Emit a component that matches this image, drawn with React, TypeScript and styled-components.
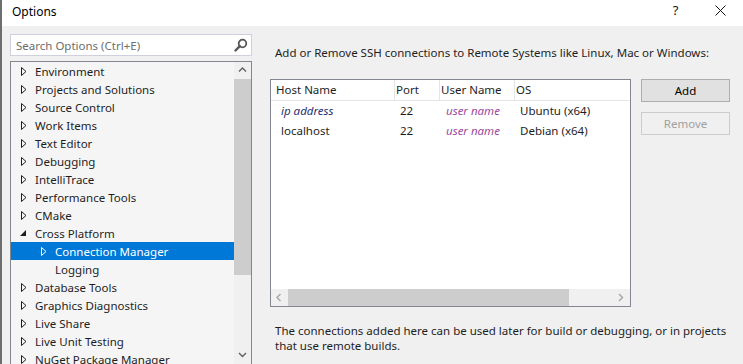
import styled, { createGlobalStyle, css } from 'styled-components'

const GlobalStyle = createGlobalStyle`
  html, body {
    margin: 0;
    padding: 0;
    background: #f0f0f0;
  }
  body {
    font-family: 'Noto Sans', 'Open Sans', sans-serif;
    font-size: 11px;
    color: #1e1e1e;
  }
`

const treeItems: { label: string; level: number; state: 'closed' | 'open' | 'leaf'; selected?: boolean }[] = [
  { label: 'Environment', level: 0, state: 'closed' },
  { label: 'Projects and Solutions', level: 0, state: 'closed' },
  { label: 'Source Control', level: 0, state: 'closed' },
  { label: 'Work Items', level: 0, state: 'closed' },
  { label: 'Text Editor', level: 0, state: 'closed' },
  { label: 'Debugging', level: 0, state: 'closed' },
  { label: 'IntelliTrace', level: 0, state: 'closed' },
  { label: 'Performance Tools', level: 0, state: 'closed' },
  { label: 'CMake', level: 0, state: 'closed' },
  { label: 'Cross Platform', level: 0, state: 'open' },
  { label: 'Connection Manager', level: 1, state: 'closed', selected: true },
  { label: 'Logging', level: 1, state: 'leaf' },
  { label: 'Database Tools', level: 0, state: 'closed' },
  { label: 'Graphics Diagnostics', level: 0, state: 'closed' },
  { label: 'Live Share', level: 0, state: 'closed' },
  { label: 'Live Unit Testing', level: 0, state: 'closed' },
  { label: 'NuGet Package Manager', level: 0, state: 'closed' },
]

const connections = [
  { host: 'ip address', port: '22', user: 'user name', os: 'Ubuntu (x64)', placeholder: true },
  { host: 'localhost', port: '22', user: 'user name', os: 'Debian (x64)', placeholder: false },
]

const Window = styled.div`
  width: 741px;
  height: 364px;
  overflow: hidden;
  border-left: 2px solid #6e6e6e;
  background: #f0f0f0;
  display: flex;
  flex-direction: column;
`

const TitleBar = styled.div`
  height: 26px;
  flex: none;
  background: #fff;
  display: flex;
  align-items: center;
  padding-left: 10px;
  font-size: 12px;
  color: #000;
`

const TitleText = styled.div`
  flex: 1;
  margin-top: -4px;
`

const TitleButton = styled.div<{ wide?: boolean }>`
  width: 45px;
  height: 26px;
  display: flex;
  align-items: center;
  justify-content: center;
  margin-top: -6px;
  font-size: 13px;
  color: #111;
`

const Body = styled.div`
  flex: 1;
  display: flex;
  min-height: 0;
`

const LeftPane = styled.div`
  width: 242px;
  flex: none;
  padding: 8px 0 0 8px;
  display: flex;
  flex-direction: column;
`

const SearchBox = styled.div`
  height: 20px;
  flex: none;
  border: 1px solid #cfd0de;
  background: #fff;
  display: flex;
  align-items: center;
  padding: 0 3px 0 5px;
  color: #6d6d6d;
  font-size: 11.5px;
`

const SearchPlaceholder = styled.span`
  flex: 1;
`

const TreePanel = styled.div`
  margin-top: 5px;
  flex: 1;
  border: 1px solid #828790;
  border-bottom: none;
  background: #f5f5f5;
  display: flex;
  min-height: 0;
`

const TreeList = styled.div`
  flex: 1;
  padding-top: 0;
`

const TreeRow = styled.div<{ level: number; selected?: boolean }>`
  ${({ level, selected }) => css`
    height: 18px;
    display: flex;
    align-items: center;
    padding-left: ${10 + level * 20}px;
    white-space: nowrap;
    font-size: 11.5px;
    color: ${selected ? '#fff' : '#1e1e1e'};
    background: ${selected ? '#0078d7' : 'transparent'};
  `}
`

const Expander = styled.span`
  width: 14px;
  flex: none;
  display: flex;
  align-items: center;
`

const VScrollBar = styled.div`
  width: 17px;
  flex: none;
  background: #f0f0f0;
  display: flex;
  flex-direction: column;
  align-items: center;
`

const ScrollArrow = styled.div`
  height: 17px;
  width: 17px;
  flex: none;
  display: flex;
  align-items: center;
  justify-content: center;
`

const VThumb = styled.div`
  width: 17px;
  height: 196px;
  flex: none;
  background: #cdcdcd;
`

const ScrollSpacer = styled.div`
  flex: 1;
`

const RightPane = styled.div`
  flex: 1;
  padding: 19px 0 0 18px;
  display: flex;
  flex-direction: column;
`

const Description = styled.div`
  padding-left: 5px;
  font-size: 11.5px;
  height: 16px;
  line-height: 16px;
  color: #1e1e1e;
`

const ListRow = styled.div`
  display: flex;
  margin-top: 18px;
  align-items: flex-start;
`

const ListBox = styled.div`
  width: 359px;
  height: 226px;
  border: 1px solid #828790;
  background: #fff;
  display: flex;
  flex-direction: column;
`

const Grid = styled.div`
  display: grid;
  grid-template-columns: 124px 45px 75px 1fr;
`

const HeaderCell = styled.div<{ pad: number; last?: boolean }>`
  ${({ pad, last }) => css`
    height: 20px;
    line-height: 20px;
    padding-left: ${pad}px;
    border-right: ${last ? 'none' : '1px solid #e5e5e5'};
    border-bottom: 1px solid #e5e5e5;
    font-size: 11.5px;
    color: #1e1e1e;
    white-space: nowrap;
  `}
`

const Cell = styled.div<{ pad: number; variant?: 'host' | 'user' }>`
  ${({ pad, variant }) => css`
    height: 20px;
    line-height: 20px;
    padding-left: ${pad}px;
    font-size: 11.5px;
    white-space: nowrap;
    color: #1e1e1e;
    ${variant === 'host' &&
    css`
      font-style: italic;
      color: #1f2f6e;
    `}
    ${variant === 'user' &&
    css`
      font-style: italic;
      color: #9b4a9d;
    `}
  `}
`

const ListFill = styled.div`
  flex: 1;
`

const HScrollBar = styled.div`
  height: 17px;
  flex: none;
  background: #f0f0f0;
  display: flex;
  align-items: center;
`

const HThumb = styled.div`
  width: 281px;
  height: 17px;
  background: #cdcdcd;
`

const ButtonColumn = styled.div`
  margin-left: 10px;
  display: flex;
  flex-direction: column;
  gap: 10px;
`

const Button = styled.div<{ disabled?: boolean }>`
  ${({ disabled }) => css`
    width: 87px;
    height: 21px;
    display: flex;
    align-items: center;
    justify-content: center;
    font-size: 11.5px;
    border: 1px solid ${disabled ? '#cccccc' : '#adadad'};
    background: ${disabled ? '#f0f0f0' : '#e1e1e1'};
    color: ${disabled ? '#a0a0a0' : '#000'};
  `}
`

const Footnote = styled.div`
  margin-top: 16px;
  padding-left: 5px;
  font-size: 11.5px;
  line-height: 15px;
  color: #1e1e1e;
  width: 470px;
`

const Triangle = ({ state, selected }: { state: 'closed' | 'open' | 'leaf'; selected?: boolean }) => {
  if (state === 'leaf') return <Expander />
  const color = selected ? '#fff' : '#1e1e1e'
  return (
    <Expander>
      {state === 'closed' ? (
        <svg width="6" height="9" viewBox="0 0 6 9">
          <path d="M0.5 0.5 L5 4.5 L0.5 8.5 Z" fill="none" stroke={color} strokeWidth="1" />
        </svg>
      ) : (
        <svg width="6" height="7" viewBox="0 0 6 7" style={{ marginLeft: -1 }}>
          <path d="M6 0 L6 6 L0 6 Z" fill={color} />
        </svg>
      )}
    </Expander>
  )
}

const Chevron = ({ dir, color }: { dir: 'up' | 'down' | 'left' | 'right'; color: string }) => {
  const d = {
    up: 'M1 5.5 L4.5 2 L8 5.5',
    down: 'M1 2 L4.5 5.5 L8 2',
    left: 'M5.5 1 L2 4.5 L5.5 8',
    right: 'M2 1 L5.5 4.5 L2 8',
  }[dir]
  return (
    <svg width="9" height="9" viewBox="0 0 9 9">
      <path d={d} fill="none" stroke={color} strokeWidth="1.4" />
    </svg>
  )
}

const SearchIcon = () => (
  <svg width="14" height="14" viewBox="0 0 14 14">
    <circle cx="8.5" cy="5.5" r="3.8" fill="none" stroke="#555" strokeWidth="1.8" />
    <path d="M5.8 8.2 L1.5 12.5" stroke="#555" strokeWidth="2.4" strokeLinecap="round" />
  </svg>
)

export default function App() {
  return (
    <>
      <GlobalStyle />
      <Window>
        <TitleBar>
          <TitleText>Options</TitleText>
          <TitleButton>?</TitleButton>
          <TitleButton>
            <svg width="11" height="11" viewBox="0 0 11 11">
              <path d="M0.5 0.5 L10.5 10.5 M10.5 0.5 L0.5 10.5" stroke="#111" strokeWidth="1" />
            </svg>
          </TitleButton>
        </TitleBar>
        <Body>
          <LeftPane>
            <SearchBox>
              <SearchPlaceholder>Search Options (Ctrl+E)</SearchPlaceholder>
              <SearchIcon />
            </SearchBox>
            <TreePanel>
              <TreeList>
                {treeItems.map(({ label, level, state, selected }) => (
                  <TreeRow key={label} level={level} selected={selected}>
                    <Triangle state={state} selected={selected} />
                    {label}
                  </TreeRow>
                ))}
              </TreeList>
              <VScrollBar>
                <ScrollArrow>
                  <Chevron dir="up" color="#606060" />
                </ScrollArrow>
                <VThumb />
                <ScrollSpacer />
                <ScrollArrow>
                  <Chevron dir="down" color="#606060" />
                </ScrollArrow>
              </VScrollBar>
            </TreePanel>
          </LeftPane>
          <RightPane>
            <Description>Add or Remove SSH connections to Remote Systems like Linux, Mac or Windows:</Description>
            <ListRow>
              <ListBox>
                <Grid>
                  <HeaderCell pad={5}>Host Name</HeaderCell>
                  <HeaderCell pad={1}>Port</HeaderCell>
                  <HeaderCell pad={1}>User Name</HeaderCell>
                  <HeaderCell pad={1} last>
                    OS
                  </HeaderCell>
                  {connections.map(({ host, port, user, os, placeholder }) => (
                    <>
                      <Cell key={host} pad={10} variant={placeholder ? 'host' : undefined}>
                        {host}
                      </Cell>
                      <Cell pad={5}>{port}</Cell>
                      <Cell pad={6} variant="user">
                        {user}
                      </Cell>
                      <Cell pad={5}>{os}</Cell>
                    </>
                  ))}
                </Grid>
                <ListFill />
                <HScrollBar>
                  <ScrollArrow>
                    <Chevron dir="left" color="#a6a6a6" />
                  </ScrollArrow>
                  <HThumb />
                  <ScrollSpacer />
                  <ScrollArrow>
                    <Chevron dir="right" color="#a6a6a6" />
                  </ScrollArrow>
                </HScrollBar>
              </ListBox>
              <ButtonColumn>
                <Button>Add</Button>
                <Button disabled>Remove</Button>
              </ButtonColumn>
            </ListRow>
            <Footnote>
              The connections added here can be used later for build or debugging, or in projects that use remote
              builds.
            </Footnote>
          </RightPane>
        </Body>
      </Window>
    </>
  )
}
